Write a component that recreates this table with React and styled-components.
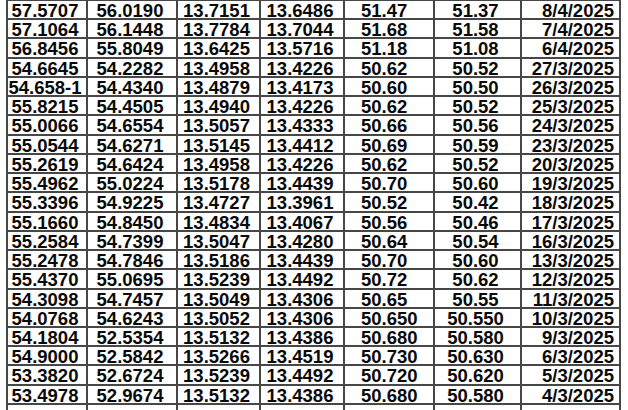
import React from "react";
import styled, { createGlobalStyle } from "styled-components";

const Global = createGlobalStyle`
  html, body { margin: 0; padding: 0; background: #ffffff; }
  body { width: 628px; height: 410px; overflow: hidden; }
`;

const Page = styled.div`
  padding-left: 6px;
  margin-top: -1px;
`;

const Grid = styled.div`
  display: inline-grid;
  grid-template-columns: 78px 88px 81px 82px 88px 85px 97px;
  grid-auto-rows: 17.24px;
  gap: 2px;
  padding: 2px;
  background: #474747;
`;

const Cell = styled.div`
  background: #ffffff;
  color: #0a0a0a;
  font-family: "Liberation Sans", Arial, sans-serif;
  font-weight: 700;
  font-size: 18.5px;
  line-height: 17.24px;
  padding-top: 1px;
  box-sizing: border-box;
  white-space: nowrap;
  overflow: visible;
  text-align: ${(p) => p.$align || "center"};
  padding-right: ${(p) => (p.$align === "right" ? "5px" : p.$align === "left" ? "0" : "4px")};
  padding-left: ${(p) => (p.$align === "left" ? "16px" : "0")};
`;

const rows = [
  ["57.5707", "56.0190", "13.7151", "13.6486", "51.47", "51.37", "8/4/2025"],
  ["57.1064", "56.1448", "13.7784", "13.7044", "51.68", "51.58", "7/4/2025"],
  ["56.8456", "55.8049", "13.6425", "13.5716", "51.18", "51.08", "6/4/2025"],
  ["54.6645", "54.2282", "13.4958", "13.4226", "50.62", "50.52", "27/3/2025"],
  ["54.658-1", "54.4340", "13.4879", "13.4173", "50.60", "50.50", "26/3/2025"],
  ["55.8215", "54.4505", "13.4940", "13.4226", "50.62", "50.52", "25/3/2025"],
  ["55.0066", "54.6554", "13.5057", "13.4333", "50.66", "50.56", "24/3/2025"],
  ["55.0544", "54.6271", "13.5145", "13.4412", "50.69", "50.59", "23/3/2025"],
  ["55.2619", "54.6424", "13.4958", "13.4226", "50.62", "50.52", "20/3/2025"],
  ["55.4962", "55.0224", "13.5178", "13.4439", "50.70", "50.60", "19/3/2025"],
  ["55.3396", "54.9225", "13.4727", "13.3961", "50.52", "50.42", "18/3/2025"],
  ["55.1660", "54.8450", "13.4834", "13.4067", "50.56", "50.46", "17/3/2025"],
  ["55.2584", "54.7399", "13.5047", "13.4280", "50.64", "50.54", "16/3/2025"],
  ["55.2478", "54.7846", "13.5186", "13.4439", "50.70", "50.60", "13/3/2025"],
  ["55.4370", "55.0695", "13.5239", "13.4492", "50.72", "50.62", "12/3/2025"],
  ["54.3098", "54.7457", "13.5049", "13.4306", "50.65", "50.55", "11/3/2025"],
  ["54.0768", "54.6243", "13.5052", "13.4306", "50.650", "50.550", "10/3/2025"],
  ["54.1804", "52.5354", "13.5132", "13.4386", "50.680", "50.580", "9/3/2025"],
  ["54.9000", "52.5842", "13.5266", "13.4519", "50.730", "50.630", "6/3/2025"],
  ["53.3820", "52.6724", "13.5239", "13.4492", "50.720", "50.620", "5/3/2025"],
  ["53.4978", "52.9674", "13.5132", "13.4386", "50.680", "50.580", "4/3/2025"],
  ["", "", "", "", "", "", ""],
];

const aligns = ["center", "center", "center", "center", "left", "center", "right"];

export default function App() {
  return (
    <>
      <Global />
      <Page>
        <Grid>
          {rows.map((r, i) =>
            r.map((v, j) => (
              <Cell key={`${i}-${j}`} $align={aligns[j]}>
                {v}
              </Cell>
            ))
          )}
        </Grid>
      </Page>
    </>
  );
}
